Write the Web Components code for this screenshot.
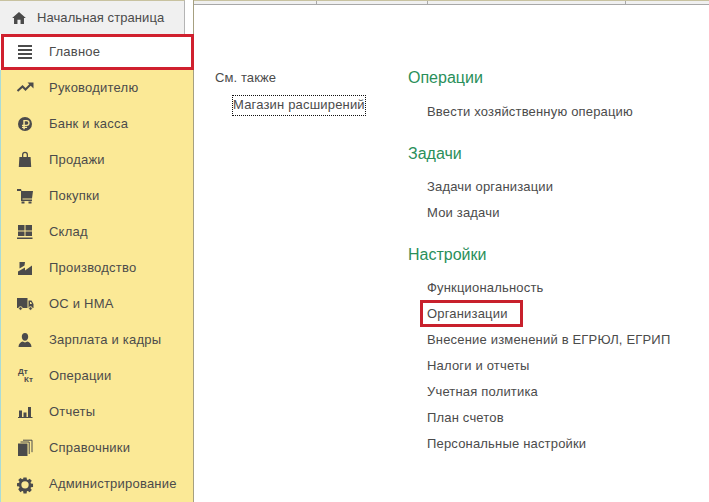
<!DOCTYPE html>
<html lang="ru"><head><meta charset="utf-8"><title>1С</title>
<style>
html,body{margin:0;padding:0;background:#fff;overflow:hidden}
body{width:709px;height:502px;font:13px "Liberation Sans",Arial,sans-serif;color:#4b4b4b}
</style></head><body>
<app-shell>
  <side-panel slot="side">
    <home-tab>Начальная страница</home-tab>
    <nav-item active icon="menu">Главное</nav-item>
    <nav-item icon="trend">Руководителю</nav-item>
    <nav-item icon="rub">Банк и касса</nav-item>
    <nav-item icon="bag">Продажи</nav-item>
    <nav-item icon="cart">Покупки</nav-item>
    <nav-item icon="stock">Склад</nav-item>
    <nav-item icon="factory">Производство</nav-item>
    <nav-item icon="truck">ОС и НМА</nav-item>
    <nav-item icon="user">Зарплата и кадры</nav-item>
    <nav-item icon="dtkt">Операции</nav-item>
    <nav-item icon="chart">Отчеты</nav-item>
    <nav-item icon="books">Справочники</nav-item>
    <nav-item icon="gear">Администрирование</nav-item>
  </side-panel>
  <tab-strip slot="top"></tab-strip>
  <see-also slot="left">
    <span slot="title">См. также</span>
    Магазин расширений
  </see-also>
  <link-group slot="right" first title="Операции">
    <link-row>Ввести хозяйственную операцию</link-row>
  </link-group>
  <link-group slot="right" title="Задачи">
    <link-row>Задачи организации</link-row>
    <link-row>Мои задачи</link-row>
  </link-group>
  <link-group slot="right" title="Настройки">
    <link-row>Функциональность</link-row>
    <link-row marked>Организации</link-row>
    <link-row>Внесение изменений в ЕГРЮЛ, ЕГРИП</link-row>
    <link-row>Налоги и отчеты</link-row>
    <link-row>Учетная политика</link-row>
    <link-row>План счетов</link-row>
    <link-row>Персональные настройки</link-row>
  </link-group>
</app-shell>
<script>
const ICONS={
menu:'<path d="M0 2h14v2H0zM0 6h14v2H0zM0 10h14v2H0zM0 14h14v2H0z"/>',
trend:'<path d="M-.5 12L4.500 7.500 7.500 10.500 13 5" fill="none" stroke="#4b4b4b" stroke-width="2"/><path d="M9.500 3.500h6v6z"/>',
rub:'<path fill-rule="evenodd" d="M7 2a7 7 0 1 1 0 14A7 7 0 0 1 7 2zM5.300 5v4.700H4v1.200h1.300v.9H4V13h1.300v1.200h1.500V13h2.300v-1.200H6.800v-.9h1.900a2.950 2.950 0 0 0 0-5.900zM6.800 6.200h1.800a1.750 1.750 0 0 1 0 3.500H6.800z"/>',
bag:'<path fill-rule="evenodd" d="M4 6V3.800a3 3 0 0 1 6 0V6h2.600l.6 10H.8l.6-10zM5.300 6h3.400V3.800a1.700 1.700 0 0 0-3.400 0z"/>',
cart:'<path d="M-1 2h4l.6 2H15l-1 7.500H4.500v1H14V14H3V4H-1z"/><rect x="3.500" y="14.500" width="3" height="2"/><rect x="10.500" y="14.500" width="3" height="2"/>',
stock:'<path d="M0 2h6.500v5.500H0zM7.500 2H14v5.500H7.500zM0 8.500h6.500V13H0zM7.500 8.500H14V13H7.500zM-1 14.500h15.500V16H-1z"/>',
factory:'<path d="M1.500 3h5.500L6.500 6.500 1.500 9.500zM0 16v-3.500L7 8.500v3l7-5V16z"/>',
truck:'<path d="M-1 3h10.500v10H-1z"/><path fill-rule="evenodd" d="M10.500 5.500H13.500L15.500 9v4h-5zM12 7v2h2l-1-2z"/><circle cx="2.500" cy="13.500" r="1.800" stroke="#fbe996"/><circle cx="12.500" cy="13.500" r="1.800" stroke="#fbe996"/>',
user:'<path d="M7 2c2 0 3.200 1.700 3.200 3.700S9 9.800 7 9.800 3.800 7.700 3.800 5.700 5 2 7 2zM.5 16c0-3.300 2.300-5 4.200-5.500L7 11.500l2.300-1c1.900.5 4.200 2.200 4.200 5.500z"/>',
chart:'<path d="M1 7.500h3V14H1zM5.500 9.500h3V14h-3zM10 4h3v10h-3zM0 14h14.500v1H0z"/>',
books:'<path d="M0 4.500h9.500V17H0z"/><path d="M2.500 3h8.700v12M5 1.200h9v12" fill="none" stroke="#4b4b4b" stroke-width="1"/>',
gear:'<path fill-rule="evenodd" transform="translate(0 2) scale(.78)" d="M7 .5h4l.4 2.700 1.300.5 2.200-1.600 2.800 2.800-1.600 2.200.5 1.300 2.700.4v4l-2.700.4-.5 1.300 1.600 2.200-2.800 2.800-2.200-1.600-1.300.5-.4 2.700H7l-.4-2.700-1.300-.5-2.200 1.600L.3 15.800l1.600-2.200-.5-1.300L-1.300 11.900v-4l2.700-.4.5-1.300L.3 4l2.800-2.800 2.200 1.600 1.300-.5zM9 5.300a3.700 3.700 0 1 0 0 9.400 3.700 3.700 0 0 0 0-9.400z"/>'
};
function def(name,css,html,init){
  customElements.define(name,class extends HTMLElement{
    constructor(){super();this.attachShadow({mode:'open'}).innerHTML='<style>'+css+'</style>'+html;}
    connectedCallback(){init&&init(this)}
  });
}
def('app-shell',`:host{display:grid;grid-template-columns:194px 1fr;grid-template-rows:5px 1fr;width:709px;height:502px;overflow:hidden}
.side{grid-row:1/3;display:block}
.top{display:block}
.main{display:flex;height:497px;box-sizing:border-box;background:#fff}
.l{width:214px;box-sizing:border-box;padding:65px 0 0 21px}
.r{flex:1;padding:61px 0 0 0;display:flex;flex-direction:column}`,
`<div class="side"><slot name="side"></slot></div><div class="top"><slot name="top"></slot></div>
<div class="main"><div class="l"><slot name="left"></slot></div><div class="r"><slot name="right"></slot></div></div>`);
def('side-panel',`:host{display:block;height:502px;background:#fbe996;border-left:1px solid #a8dcd8;border-right:1px solid #a6a080;box-sizing:border-box;width:194px;position:relative;overflow:visible}`,`<slot></slot>`);
def('home-tab',`:host{display:block;height:34px;background:#fff;margin-left:-1px;font-size:13px;color:#4b4b4b}
.t{display:flex;align-items:center;height:34px;width:185px;background:#f0f0f0;border-right:1px solid #b4b4b4;border-top:1px solid #c8c2a0;box-sizing:border-box;padding-left:12px;letter-spacing:.08px}
.l{margin-bottom:1px}
svg{width:14px;height:12px;margin-right:11px;fill:#4a4a4a;flex:none}`,
`<div class="t"><svg viewBox="0 0 16 14"><path d="M8 0l8 7h-2.200v7H9.800V9H6.200v5H2.200V7H0z"/></svg><span class="l"><slot></slot></span></div>`);
def('nav-item',`:host{display:flex;align-items:center;height:36px;box-sizing:border-box;padding-left:17px;font-size:13px;letter-spacing:.22px;color:#4b4b4b;position:relative}
:host([active]){background:#fff;margin-left:-1px;margin-right:-1px;padding-left:18px}
:host([active])::after{content:"";position:absolute;inset:0 0 0 1px;border:3px solid #d0202e;pointer-events:none}
.l{margin-bottom:2px}
svg{width:18px;height:18px;fill:#4b4b4b;flex:none;margin-right:13px;overflow:visible}
.d{width:18px;flex:none;margin-right:13px;font:bold 8px/8px "Liberation Sans",sans-serif;color:#4b4b4b;letter-spacing:0}
.d span{display:block}.d span+span{padding-left:6px}`,
`<span id="i" style="display:contents"></span><span class="l"><slot></slot></span>`,
el=>{const n=el.getAttribute('icon');const h=el.shadowRoot.getElementById('i');
  h.innerHTML=n==='dtkt'?'<div class="d"><span>Дт</span><span>Кт</span></div>':'<svg viewBox="0 0 18 18">'+ICONS[n]+'</svg>';});
def('tab-strip',`:host{display:flex;height:5px;box-sizing:border-box;border-top:1px solid #c8c2a0;border-bottom:1px solid #a8a8a8;background:#f0f0f0}
i{display:block;border-right:1px solid #a8a8a8;box-sizing:border-box}`,
`<i style="width:123px"></i><i style="width:111px"></i><i style="width:198px"></i>`);
def('see-also',`:host{display:block;font-size:13px;color:#4b4b4b;letter-spacing:.1px}
.t{display:block;height:19px;line-height:16px}
.f{display:inline-block;margin:6px 0 0 17px;padding:0 1px;height:21px;line-height:19px;outline:1px dotted #111;outline-offset:-1px;box-sizing:border-box;letter-spacing:.18px}`,
`<div class="t"><slot name="title"></slot></div><div class="f"><slot></slot></div>`);
def('link-group',`:host{display:block;margin-bottom:17px}
h3{margin:0 0 8px;font:16px/24px "Liberation Sans",sans-serif;color:#2a8f5a;height:24px}
:host([first]) h3{margin-bottom:9px}
.b{padding-left:19px}`,
`<h3 id="h"></h3><div class="b"><slot></slot></div>`,
el=>{el.shadowRoot.getElementById('h').textContent=el.getAttribute('title')});
def('link-row',`:host{display:block;height:26px;line-height:26px;font-size:13px;letter-spacing:.18px;color:#4b4b4b;position:relative}
:host([marked])::after{content:"";position:absolute;left:-7px;top:-1px;width:103px;height:27px;box-sizing:border-box;border:3px solid #c8202c}`,`<slot></slot>`);
</script>
</body></html>
